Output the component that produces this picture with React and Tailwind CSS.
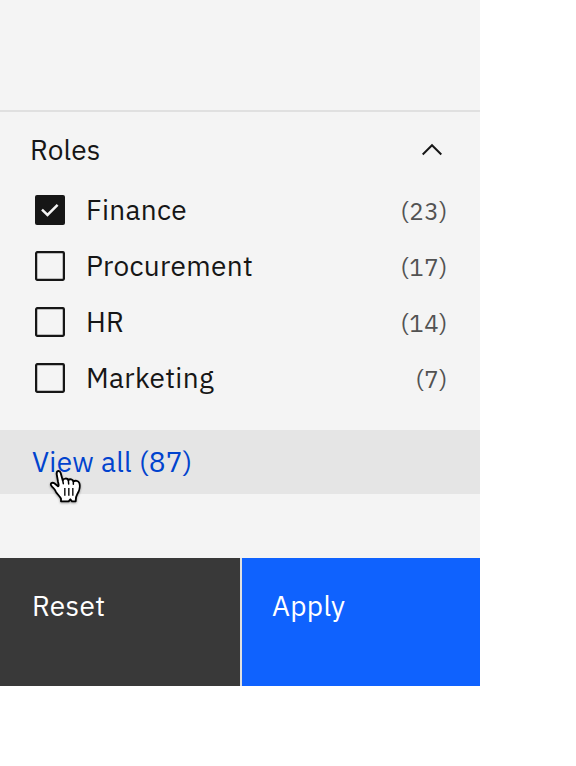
const roles = [
  { name: 'Finance', count: 23, checked: true },
  { name: 'Procurement', count: 17, checked: false },
  { name: 'HR', count: 14, checked: false },
  { name: 'Marketing', count: 7, checked: false },
];

function Checkbox({ checked }) {
  return (
    <svg className="h-[30px] w-[30px] shrink-0" viewBox="0 0 30 30" fill="none">
      {checked ? (
        <>
          <rect width="30" height="30" rx="2" fill="#161616" />
          <path d="M7 14.6 12.5 20 22.6 9.8" stroke="#f4f4f4" strokeWidth="2.5" />
        </>
      ) : (
        <rect x="1.1" y="1.1" width="27.8" height="27.8" rx="1.5" stroke="#161616" strokeWidth="2.3" />
      )}
    </svg>
  );
}

function HandCursor() {
  return (
    <svg
      className="absolute left-10 top-[30px] h-[50px] w-[50px] drop-shadow-[0_1px_1px_rgba(0,0,0,0.35)]"
      viewBox="0 0 150 150"
      fill="none"
    >
      <path
        d="M63 124V116C59 107 51 103 47 94C44 85 38 84 34 77C29 70 37 66 43 70L54 79C57 79 56 72 54 65L50 42C49 31 59 30 62 39L68 61C71 54 82 54 85 60C89 56 99 58 100 64C106 61 115 62 118 69C121 78 118 93 112 102C108 108 107 116 107 124H96L91 118L86 124Z"
        fill="white"
        stroke="black"
        strokeWidth="5.5"
        strokeLinejoin="round"
      />
      <path d="M68 60 70 71M85 60 86 72M100 64V73" stroke="black" strokeWidth="4.5" strokeLinecap="round" />
      <path d="M74.5 84V107M86.5 84V107M98.5 84V107" stroke="black" strokeWidth="4" />
    </svg>
  );
}

export default function App() {
  return (
    <div className="h-[766px] w-full overflow-hidden bg-white font-['IBM_Plex_Sans',Roboto,sans-serif] text-[28px] leading-9 tracking-[0.32px] text-[#161616]">
      <div className="flex h-[686px] w-[480px] flex-col bg-[#f4f4f4]">
        <div className="h-[112px] shrink-0 border-b-2 border-[#e0e0e0]" />
        <section className="h-[318px] shrink-0">
          <div className="flex h-[70px] items-center justify-between pb-[7px] pl-[30px] pr-[38px] pt-3">
            <h2 className="tracking-[0.15px]">Roles</h2>
            <svg className="h-5 w-5" viewBox="0 0 20 20" fill="none">
              <path d="M0.7 14.5 10 5.2 19.3 14.5" stroke="#161616" strokeWidth="2" />
            </svg>
          </div>
          <ul>
            {roles.map((role) => (
              <li key={role.name} className="flex h-14 items-center pl-[35px] pr-8">
                <Checkbox checked={role.checked} />
                <span className="ml-[21px]">{role.name}</span>
                <span className="ml-auto pt-px text-[24px] tracking-[0.64px] text-[#525252]">({role.count})</span>
              </li>
            ))}
          </ul>
        </section>
        <div className="relative h-16 shrink-0 bg-[#e5e5e5] pl-8 pt-[14px] text-[#0043ce]">
          <span>View all (87)</span>
          <HandCursor />
        </div>
        <div className="h-16 shrink-0" />
        <div className="flex h-32 shrink-0 gap-0.5 bg-[#e0e0e0] text-white">
          <button className="flex w-[240px] bg-[#393939] pl-8 pt-[30px]">Reset</button>
          <button className="flex w-[238px] bg-[#0f62fe] pl-[30px] pt-[30px]">Apply</button>
        </div>
      </div>
    </div>
  );
}
